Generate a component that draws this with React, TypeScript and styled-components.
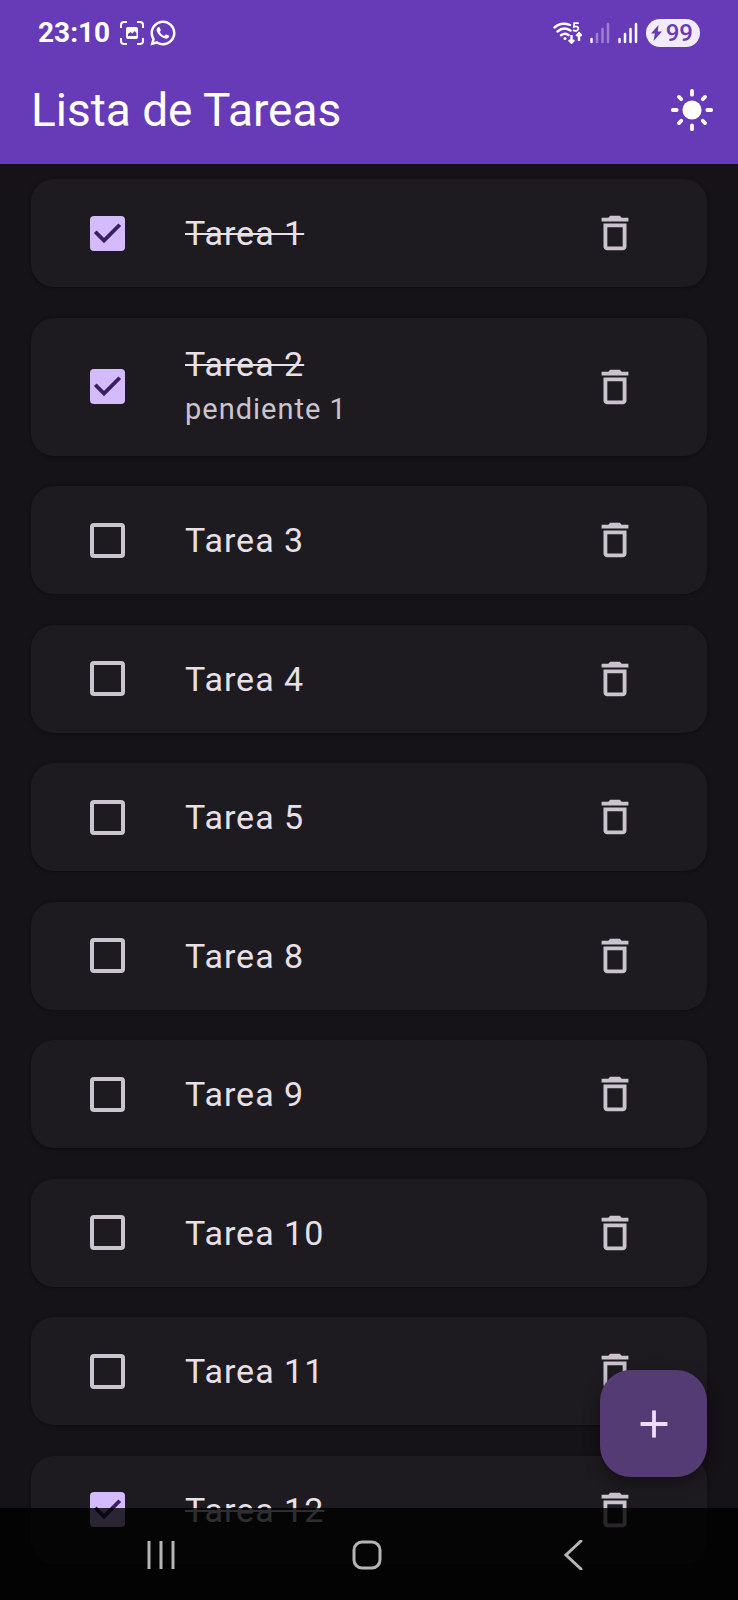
import React, { useState } from "react";
import styled, { createGlobalStyle } from "styled-components";
import { RiWhatsappLine } from "react-icons/ri";

const GlobalStyle = createGlobalStyle`
  *, *::before, *::after { box-sizing: border-box; }
  body {
    margin: 0;
    background: #151218;
    color: #e7e0e8;
    font-family: Roboto, "Liberation Sans", sans-serif;
  }
  button { border: 0; padding: 0; background: none; color: inherit; font: inherit; cursor: pointer; }
`;

const Screen = styled.div`
  display: flex;
  flex-direction: column;
  min-height: 100vh;
`;

const Header = styled.header`
  background: #673ab7;
  color: #fff;
`;

const StatusBar = styled.div`
  display: flex;
  align-items: center;
  justify-content: space-between;
  height: 56px;
  padding: 9px 38px 0;
`;

const StatusGroup = styled.div<{ $gap: number }>`
  display: flex;
  align-items: center;
  gap: ${(p) => p.$gap}px;
  svg { display: block; }
`;

const Clock = styled.time`
  font-size: 28px;
  font-weight: 700;
  line-height: 32px;
  margin-right: 6px;
`;

const Battery = styled.div`
  display: flex;
  align-items: center;
  gap: 4px;
  height: 28px;
  padding: 0 7px 0 5px;
  border-radius: 14px;
  background: #f2ecfa;
  color: #673ab7;
  font-size: 24px;
  font-weight: 500;
  line-height: 28px;
`;

const AppBar = styled.div`
  display: flex;
  align-items: center;
  justify-content: space-between;
  height: 108px;
  padding-left: 31px;
`;

const Title = styled.h1`
  margin: 0;
  font-size: 46px;
  font-weight: 400;
  line-height: 56px;
`;

const IconButton = styled.button`
  display: grid;
  place-items: center;
  flex: none;
  width: 92px;
  height: 92px;
`;

const TaskList = styled.ul`
  flex: 1;
  display: flex;
  flex-direction: column;
  justify-content: space-between;
  gap: 30px;
  margin: 0;
  padding: 15px 31px 36px;
  list-style: none;
`;

const Card = styled.li<{ $tall: boolean }>`
  display: flex;
  align-items: center;
  height: ${(p) => (p.$tall ? 138 : 108)}px;
  padding: 0 46px 0 31px;
  border-radius: 23px;
  background: #1e1b20;
  box-shadow: 0 1px 4px rgba(0, 0, 0, 0.3);
  color: #cbc4cf;
`;

const TaskLabel = styled.label`
  display: flex;
  align-items: center;
  gap: 32px;
  flex: 1;
  cursor: pointer;
`;

const CheckArea = styled.span`
  display: grid;
  place-items: center;
  width: 91px;
  height: 91px;
  > * { grid-area: 1 / 1; }
  svg { pointer-events: none; }
`;

const Checkbox = styled.input`
  appearance: none;
  width: 35px;
  height: 35px;
  margin: 0;
  border: 4px solid #cbc4cf;
  border-radius: 4px;
  &:checked { border: 0; background: #d4bbfc; }
`;

const TaskText = styled.span`
  display: flex;
  flex-direction: column;
`;

const TaskTitle = styled.span<{ $done: boolean }>`
  color: #e7e0e8;
  font-size: 34px;
  line-height: 44px;
  letter-spacing: 1px;
  text-decoration: ${(p) => (p.$done ? "line-through" : "none")};
  text-decoration-thickness: 2px;
`;

const TaskNote = styled.span`
  font-size: 29px;
  line-height: 46px;
  letter-spacing: 1px;
`;

const AddButton = styled.button`
  && {
    position: fixed;
    right: 31px;
    bottom: 123px;
    display: grid;
    place-items: center;
    width: 107px;
    height: 107px;
    border-radius: 31px;
    background: #553b74;
    color: #f0dbff;
    box-shadow: 0 6px 16px rgba(0, 0, 0, 0.4);
  }
`;

const NavBar = styled.nav`
  position: fixed;
  left: 0;
  right: 0;
  bottom: 0;
  display: flex;
  justify-content: center;
  height: 92px;
  padding: 2px 4px 0 0;
  background: rgba(0, 0, 0, 0.8);
  color: #b5b5b5;
`;

const NavButton = styled.button`
  display: grid;
  place-items: center;
  width: 28%;
`;

const TrashIcon = () => (
  <svg width="46" height="46" viewBox="0 0 24 24" fill="currentColor" aria-hidden="true">
    <path d="M6 19c0 1.1.9 2 2 2h8c1.1 0 2-.9 2-2V7H6v12zM8 9h8v10H8V9zm7.5-5l-1-1h-5l-1 1H5v2h14V4z" />
  </svg>
);

const CheckMark = () => (
  <svg width="35" height="35" viewBox="0 0 18 18" fill="none" stroke="#3b2060" strokeWidth="2" aria-hidden="true">
    <path d="M2.7 8.1 7.2 12.6 15.3 4.5" />
  </svg>
);

const SunIcon = () => (
  <svg width="46" height="46" viewBox="-12 -12 24 24" aria-hidden="true">
    <circle r="5" fill="currentColor" />
    <path
      d="M0-10v2M0 10V8M-10 0h2M10 0H8M-6.8-6.8l1.2 1.2M6.8-6.8 5.6-5.6M-6.8 6.8l1.2-1.2M6.8 6.8 5.6 5.6"
      stroke="currentColor"
      strokeWidth="2"
      strokeLinecap="round"
    />
  </svg>
);

const ScreenshotIcon = () => (
  <svg width="24" height="24" viewBox="0 0 24 24" fill="none" aria-hidden="true">
    <path
      d="M1 7V4a3 3 0 0 1 3-3h3M17 1h3a3 3 0 0 1 3 3v3M23 17v3a3 3 0 0 1-3 3h-3M7 23H4a3 3 0 0 1-3-3v-3"
      stroke="currentColor"
      strokeWidth="2"
    />
    <rect x="6" y="6" width="12" height="12" rx="2" fill="currentColor" />
    <path d="M8 15v-2l2.500-2 2 1.500L14.500 10l2 2v3z" fill="#673ab7" />
  </svg>
);

const WifiIcon = () => (
  <svg width="29" height="22" viewBox="0 0 29 22" fill="none" stroke="currentColor" strokeWidth="2.400" strokeLinecap="round" aria-hidden="true">
    <path d="M1.500 5.500C6 1.500 12 1 17 3M4.500 9.500c4-3.500 9-3.500 13-1M8 13.200c2.500-1.800 5.500-1.800 7.500-.2" />
    <circle cx="12" cy="16.500" r="1.500" fill="currentColor" stroke="none" />
    <path d="M25 1.200H21.200L20.900 4.800C24 3.600 25.600 5 25.200 7 24.800 9 22.300 9.300 20.600 8.400" strokeWidth="1.800" />
    <path d="M18.500 13v7.500M15.800 18l2.700 2.700 2.700-2.700M26 19v-7.500M23.300 14l2.700-2.700 2.700 2.700" strokeLinecap="butt" />
  </svg>
);

const SignalIcon = ({ active }: { active: number }) => (
  <svg width="20" height="22" viewBox="0 0 20 22" stroke="currentColor" strokeWidth="2.500" strokeLinecap="round" aria-hidden="true">
    {[17, 12, 7, 2].map((top, i) => (
      <path key={top} d={`M${1.5 + i * 5.5} ${top}V20`} opacity={i < active ? 1 : 0.35} />
    ))}
  </svg>
);

const BoltIcon = () => (
  <svg width="11" height="16" viewBox="0 0 11 16" fill="currentColor" aria-hidden="true">
    <path d="M7.500 0 0 8.500h3.800L2.500 16 11 6.500H6.800z" />
  </svg>
);

interface Task {
  id: number;
  note?: string;
  done: boolean;
}

const initialTasks: Task[] = [
  { id: 1, done: true },
  { id: 2, note: "pendiente 1", done: true },
  { id: 3, done: false },
  { id: 4, done: false },
  { id: 5, done: false },
  { id: 8, done: false },
  { id: 9, done: false },
  { id: 10, done: false },
  { id: 11, done: false },
  { id: 12, done: true },
];

export default function App() {
  const [tasks, setTasks] = useState(initialTasks);

  const toggle = (id: number) =>
    setTasks((all) => all.map((t) => (t.id === id ? { ...t, done: !t.done } : t)));
  const remove = (id: number) => setTasks((all) => all.filter((t) => t.id !== id));
  const add = () =>
    setTasks((all) => [...all, { id: Math.max(0, ...all.map((t) => t.id)) + 1, done: false }]);

  return (
    <>
      <GlobalStyle />
      <Screen>
        <Header>
          <StatusBar>
            <StatusGroup $gap={4}>
              <Clock>23:10</Clock>
              <ScreenshotIcon />
              <RiWhatsappLine size={30} aria-hidden="true" />
            </StatusGroup>
            <StatusGroup $gap={8}>
              <WifiIcon />
              <SignalIcon active={1} />
              <SignalIcon active={4} />
              <Battery>
                <BoltIcon />
                99
              </Battery>
            </StatusGroup>
          </StatusBar>
          <AppBar>
            <Title>Lista de Tareas</Title>
            <IconButton type="button" aria-label="Cambiar tema">
              <SunIcon />
            </IconButton>
          </AppBar>
        </Header>
        <TaskList>
          {tasks.map((task) => (
            <Card key={task.id} $tall={Boolean(task.note)}>
              <TaskLabel>
                <CheckArea>
                  <Checkbox type="checkbox" checked={task.done} onChange={() => toggle(task.id)} />
                  {task.done && <CheckMark />}
                </CheckArea>
                <TaskText>
                  <TaskTitle $done={task.done}>{`Tarea ${task.id}`}</TaskTitle>
                  {task.note && <TaskNote>{task.note}</TaskNote>}
                </TaskText>
              </TaskLabel>
              <IconButton type="button" aria-label={`Eliminar Tarea ${task.id}`} onClick={() => remove(task.id)}>
                <TrashIcon />
              </IconButton>
            </Card>
          ))}
        </TaskList>
      </Screen>
      <AddButton type="button" aria-label="Añadir tarea" onClick={add}>
        <svg width="46" height="46" viewBox="0 0 24 24" fill="currentColor" aria-hidden="true">
          <path d="M19 13h-6v6h-2v-6H5v-2h6V5h2v6h6z" />
        </svg>
      </AddButton>
      <NavBar>
        <NavButton type="button" aria-label="Recientes">
          <svg width="30" height="30" viewBox="0 0 30 30" stroke="currentColor" strokeWidth="3" aria-hidden="true">
            <path d="M3 1v28M15 1v28M27 1v28" />
          </svg>
        </NavButton>
        <NavButton type="button" aria-label="Inicio">
          <svg width="30" height="30" viewBox="0 0 30 30" fill="none" stroke="currentColor" strokeWidth="3" aria-hidden="true">
            <rect x="2" y="2" width="26" height="26" rx="8" />
          </svg>
        </NavButton>
        <NavButton type="button" aria-label="Atrás">
          <svg width="30" height="30" viewBox="0 0 30 30" fill="none" stroke="currentColor" strokeWidth="3" strokeLinecap="round" aria-hidden="true">
            <path d="M23 1 8 15l15 14" />
          </svg>
        </NavButton>
      </NavBar>
    </>
  );
}
